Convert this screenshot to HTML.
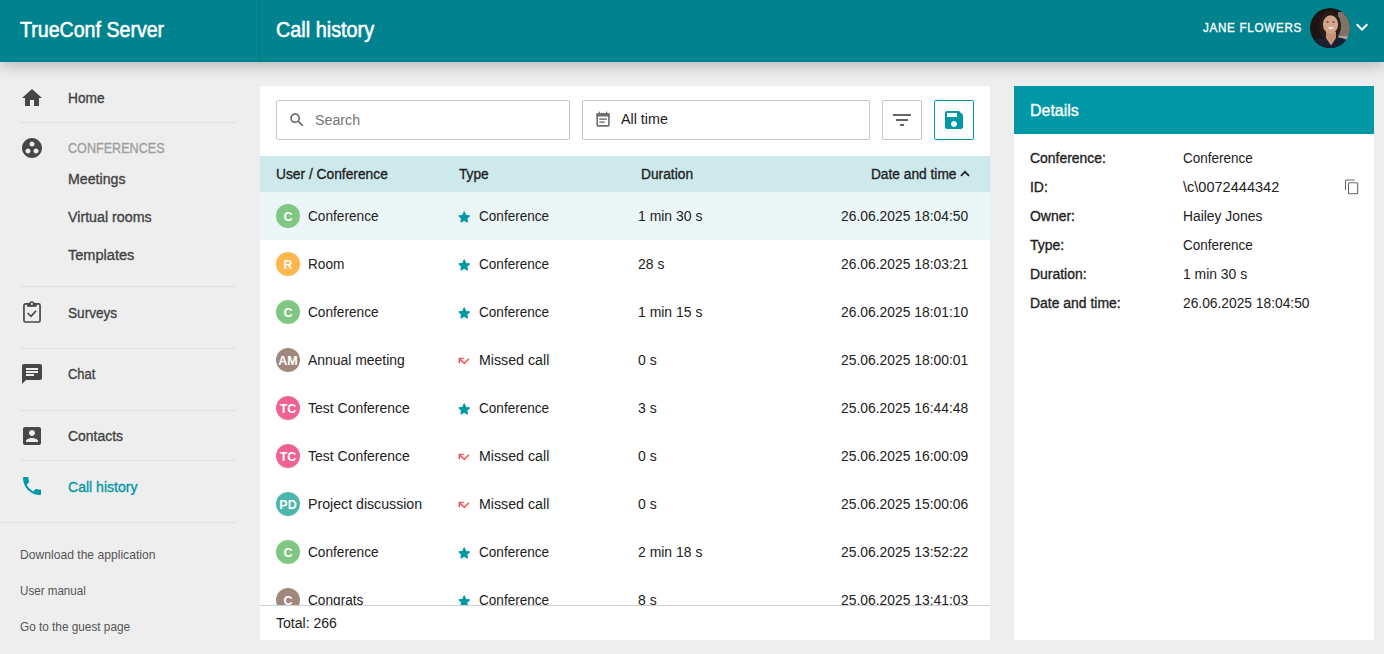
<!DOCTYPE html>
<html><head><meta charset="utf-8">
<style>
*{box-sizing:border-box;margin:0;padding:0}
html,body{width:1384px;height:654px;overflow:hidden}
body{background:#eeeeee;font-family:"Liberation Sans",sans-serif;color:#212121;position:relative}
.a{position:absolute;white-space:nowrap}
svg{display:block;position:absolute}
.sep{position:absolute;left:20px;width:216px;height:1px;background:#e0e0e0}
.box{position:absolute;top:100px;height:40px;border:1px solid #c6c6c6;border-radius:2px;background:#fff}
.av{position:absolute;left:276px;width:24px;height:24px;border-radius:50%;color:#fff;font-size:12.5px;font-weight:bold;text-align:center;line-height:26.5px}
</style></head><body>
<div class="a" style="left:260px;top:86px;width:730px;height:554px;background:#fff"></div>
<div class="a" style="left:1014px;top:86px;width:360px;height:554px;background:#fff"></div>
<div class="a" style="left:1014px;top:86px;width:360px;height:48px;background:#0097a7"></div>
<div class="a" style="left:0;top:0;width:1384px;height:62px;background:#00838f;box-shadow:0 2px 16px rgba(0,0,0,.29);z-index:2">
<div class="a" style="left:259px;top:0;width:1px;height:62px;background:rgba(0,0,0,.12)"></div>
<div class="a" style="top:16.65px;font-size:21.2px;line-height:26px;color:#fff;left:20px;-webkit-text-stroke:0.55px #fff;transform:scaleX(0.9250);transform-origin:left 0;">TrueConf Server</div>
<div class="a" style="top:16.65px;font-size:21.2px;line-height:26px;color:#fff;left:276px;-webkit-text-stroke:0.55px #fff;transform:scaleX(0.9363);transform-origin:left 0;">Call history</div>
<div class="a" style="top:18.89px;font-size:13.3px;line-height:17px;color:#fff;left:1203px;letter-spacing:0.8px;-webkit-text-stroke:0.35px #fff;transform:scaleX(0.8757);transform-origin:left 0;">JANE FLOWERS</div>
<svg style="left:1310px;top:8px" width="40" height="40" viewBox="0 0 40 40">
<defs><clipPath id="cc"><circle cx="20" cy="20" r="20"/></clipPath></defs>
<g clip-path="url(#cc)">
<rect width="40" height="40" fill="#1d1512"/>
<rect x="28" y="4" width="12" height="30" fill="#7f7368"/>
<rect x="29" y="28" width="11" height="3" fill="#a99d90"/>
<ellipse cx="20" cy="18" rx="11" ry="14.5" fill="#2a1c17"/>
<rect x="16" y="24" width="10" height="14" fill="#c49479"/>
<ellipse cx="20.5" cy="16.5" rx="7.6" ry="9.2" fill="#d2a48b"/>
<path d="M0 40 L2 34 Q9 29 16 30 L21 37.5 L26 30 Q34 29 38 34 L40 40 Z" fill="#1a1f31"/>
<ellipse cx="21" cy="20" rx="2.8" ry="1.2" fill="#e9dcd4"/>
<ellipse cx="17.6" cy="14" rx="1.3" ry="0.7" fill="#5a3a2e"/>
<ellipse cx="23.6" cy="14" rx="1.3" ry="0.7" fill="#5a3a2e"/>
</g></svg>
<svg style="left:1350px;top:15.3px" width="24" height="24" viewBox="0 0 24 24"><path fill="#fff" d="M16.59 8.59L12 13.17 7.41 8.59 6 10l6 6 6-6z"/></svg>
</div>
<svg style="left:20px;top:85.8px" width="24" height="24" viewBox="0 0 24 24"><path fill="#474747" d="M10 20v-6h4v6h5v-8h3L12 3 2 12h3v8z"/></svg>
<div class="a" style="top:87.90px;font-size:15.3px;line-height:19px;color:#424242;left:68px;-webkit-text-stroke:0.35px #424242;transform:scaleX(0.8953);transform-origin:left 0;">Home</div>
<div class="sep" style="top:122px"></div>
<svg style="left:20px;top:136px" width="24" height="24" viewBox="0 0 24 24"><path fill="#474747" d="M12 2C6.48 2 2 6.48 2 12s4.480 10 10 10 10-4.48 10-10S17.52 2 12 2zM8 17.5c-1.38 0-2.5-1.12-2.5-2.5s1.12-2.5 2.5-2.5 2.5 1.12 2.5 2.5-1.12 2.5-2.5 2.5zM9.5 8c0-1.38 1.12-2.5 2.5-2.5s2.5 1.12 2.5 2.5-1.12 2.5-2.5 2.5S9.5 9.38 9.5 8zm6.5 9.5c-1.38 0-2.5-1.12-2.5-2.5s1.12-2.5 2.5-2.5 2.5 1.12 2.5 2.5-1.12 2.5-2.5 2.5z"/></svg>
<div class="a" style="top:138.13px;font-size:15.5px;line-height:19px;color:#9e9e9e;left:68px;-webkit-text-stroke:0.35px #9e9e9e;transform:scaleX(0.8128);transform-origin:left 0;">CONFERENCES</div>
<div class="a" style="top:168.90px;font-size:15.3px;line-height:19px;color:#424242;left:68px;-webkit-text-stroke:0.35px #424242;transform:scaleX(0.9270);transform-origin:left 0;">Meetings</div>
<div class="a" style="top:206.90px;font-size:15.3px;line-height:19px;color:#424242;left:68px;-webkit-text-stroke:0.35px #424242;transform:scaleX(0.9311);transform-origin:left 0;">Virtual rooms</div>
<div class="a" style="top:244.90px;font-size:15.3px;line-height:19px;color:#424242;left:68px;-webkit-text-stroke:0.35px #424242;transform:scaleX(0.9508);transform-origin:left 0;">Templates</div>
<div class="sep" style="top:286px"></div>
<svg style="left:20px;top:300px" width="24" height="24" viewBox="0 0 24 24"><rect x="3.95" y="3.9" width="16.1" height="18.1" rx="1.6" fill="none" stroke="#474747" stroke-width="1.7"/><rect x="7" y="3.4" width="9.8" height="3.4" rx="0.8" fill="#474747"/><circle cx="11.9" cy="3.9" r="2.6" fill="#474747"/><circle cx="11.9" cy="3.9" r="1.05" fill="#eeeeee"/><path d="M7.6 13L11.1 16.3L16.1 10.8" fill="none" stroke="#474747" stroke-width="1.7"/></svg>
<div class="a" style="top:302.90px;font-size:15.3px;line-height:19px;color:#424242;left:68px;-webkit-text-stroke:0.35px #424242;transform:scaleX(0.8888);transform-origin:left 0;">Surveys</div>
<div class="sep" style="top:348px"></div>
<svg style="left:20px;top:362px" width="24" height="24" viewBox="0 0 24 24"><path fill="#474747" d="M20 2H4c-1.1 0-1.99.9-1.99 2L2 22l4-4h14c1.1 0 2-.9 2-2V4c0-1.1-.9-2-2-2zM6 9h12v2H6V9zm8 5H6v-2h8v2zm4-6H6V6h12v2z"/></svg>
<div class="a" style="top:363.90px;font-size:15.3px;line-height:19px;color:#424242;left:68px;-webkit-text-stroke:0.35px #424242;transform:scaleX(0.8470);transform-origin:left 0;">Chat</div>
<div class="sep" style="top:410px"></div>
<svg style="left:20px;top:424px" width="24" height="24" viewBox="0 0 24 24"><path fill="#474747" d="M3 5v14c0 1.1.89 2 2 2h14c1.1 0 2-.9 2-2V5c0-1.1-.9-2-2-2H5c-1.11 0-2 .9-2 2zm12 4c0 1.66-1.34 3-3 3s-3-1.34-3-3 1.34-3 3-3 3 1.34 3 3zm-9 8c0-2 4-3.1 6-3.1s6 1.1 6 3.1v1H6v-1z"/></svg>
<div class="a" style="top:425.90px;font-size:15.3px;line-height:19px;color:#424242;left:68px;-webkit-text-stroke:0.35px #424242;transform:scaleX(0.9121);transform-origin:left 0;">Contacts</div>
<div class="sep" style="top:460px"></div>
<svg style="left:20px;top:474px" width="24" height="24" viewBox="0 0 24 24"><path fill="#0097a7" d="M6.62 10.79c1.44 2.83 3.76 5.14 6.59 6.59l2.2-2.2c.27-.27.67-.36 1.02-.24 1.12.37 2.33.57 3.57.57.55 0 1 .45 1 1V20c0 .55-.45 1-1 1-9.39 0-17-7.61-17-17 0-.55.45-1 1-1h3.5c.55 0 1 .45 1 1 0 1.25.2 2.45.57 3.57.11.35.03.74-.25 1.02l-2.2 2.2z"/></svg>
<div class="a" style="top:476.90px;font-size:15.3px;line-height:19px;color:#0097a7;left:68px;-webkit-text-stroke:0.35px #0097a7;transform:scaleX(0.9183);transform-origin:left 0;">Call history</div>
<div class="sep" style="top:522px;left:0;width:236px"></div>
<div class="a" style="top:545.85px;font-size:13.4px;line-height:17px;color:#555;left:20px;transform:scaleX(0.9050);transform-origin:left 0;">Download the application</div>
<div class="a" style="top:581.85px;font-size:13.4px;line-height:17px;color:#555;left:20px;transform:scaleX(0.8668);transform-origin:left 0;">User manual</div>
<div class="a" style="top:617.85px;font-size:13.4px;line-height:17px;color:#555;left:20px;transform:scaleX(0.8800);transform-origin:left 0;">Go to the guest page</div>
<div class="box" style="left:276px;width:294px"></div>
<svg style="left:288px;top:111px" width="18" height="18" viewBox="0 0 24 24"><path fill="#616161" d="M15.5 14h-.79l-.28-.27C15.41 12.59 16 11.11 16 9.5 16 5.91 13.09 3 9.5 3S3 5.91 3 9.5 5.91 16 9.5 16c1.61 0 3.09-.59 4.23-1.57l.27.28v.79l5 4.99L20.49 19l-4.99-5zm-6 0C7.01 14 5 11.99 5 9.5S7.01 5 9.5 5 14 7.01 14 9.5 11.99 14 9.5 14z"/></svg>
<div class="a" style="top:110.13px;font-size:15.5px;line-height:19px;color:#757575;left:315px;transform:scaleX(0.9179);transform-origin:left 0;">Search</div>
<div class="box" style="left:582px;width:288px"></div>
<svg style="left:595px;top:110px" width="16" height="17" viewBox="0 0 16 17">
<rect x="2.2" y="4" width="11.7" height="11.9" rx="0.9" fill="none" stroke="#6d6d6d" stroke-width="1.6"/>
<rect x="1.4" y="3.2" width="13.3" height="3.3" rx="0.6" fill="#6d6d6d"/>
<rect x="3.8" y="1.6" width="1.1" height="2.2" fill="#6d6d6d"/>
<rect x="11" y="1.6" width="1.1" height="2.2" fill="#6d6d6d"/>
<rect x="4.3" y="8.4" width="7.4" height="1.4" fill="#6d6d6d"/>
<rect x="4.3" y="11.4" width="5.4" height="1.4" fill="#6d6d6d"/></svg>
<div class="a" style="top:109.13px;font-size:15.5px;line-height:19px;color:#212121;left:621px;transform:scaleX(0.9220);transform-origin:left 0;">All time</div>
<div class="box" style="left:882px;width:40px"></div>
<svg style="left:890px;top:108px" width="24" height="24" viewBox="0 0 24 24"><path fill="#666" d="M10 18h4v-2h-4v2zM3 6v2h18V6H3zm3 7h12v-2H6v2z"/></svg>
<div class="box" style="left:934px;width:40px;border:1px solid #0097a7"></div>
<svg style="left:942px;top:108px" width="24" height="24" viewBox="0 0 24 24"><path fill="#0097a7" d="M17 3H5c-1.11 0-2 .9-2 2v14c0 1.1.89 2 2 2h14c1.1 0 2-.9 2-2V7l-4-4zm-5 16c-1.66 0-3-1.34-3-3s1.34-3 3-3 3 1.34 3 3-1.34 3-3 3zm3-10H5V5h10v4z"/></svg>
<div class="a" style="left:260px;top:156px;width:730px;height:36px;background:#cde9ec"></div>
<div class="a" style="top:164.13px;font-size:15.5px;line-height:19px;color:#212121;left:276px;-webkit-text-stroke:0.35px #212121;transform:scaleX(0.8890);transform-origin:left 0;">User / Conference</div>
<div class="a" style="top:164.13px;font-size:15.5px;line-height:19px;color:#212121;left:459px;-webkit-text-stroke:0.35px #212121;transform:scaleX(0.8825);transform-origin:left 0;">Type</div>
<div class="a" style="top:164.13px;font-size:15.5px;line-height:19px;color:#212121;left:641px;-webkit-text-stroke:0.35px #212121;transform:scaleX(0.8887);transform-origin:left 0;">Duration</div>
<div class="a" style="top:164.13px;font-size:15.5px;line-height:19px;color:#212121;right:428px;-webkit-text-stroke:0.35px #212121;transform:scaleX(0.8869);transform-origin:right 0;">Date and time</div>
<svg style="left:958px;top:168px" width="14" height="12" viewBox="0 0 14 12"><path d="M3 7.8L7 3.8l4 4" fill="none" stroke="#212121" stroke-width="1.7"/></svg>
<div class="a" style="left:260px;top:192px;width:730px;height:413px;overflow:hidden">
<div class="a" style="left:0;top:0;width:730px;height:48px;background:#ebf6f7"></div>
<div class="av" style="left:16px;top:12px;background:#81c784">C</div>
<div class="a" style="top:14.13px;font-size:15.5px;line-height:19px;color:#212121;left:48px;transform:scaleX(0.8810);transform-origin:left 0;">Conference</div>
<svg style="left:195.8px;top:17.3px" width="16.4" height="16.4" viewBox="0 0 24 24"><path fill="#0097a7" d="M12 17.27l4.15 2.51c.76.46 1.69-.22 1.49-1.08l-1.1-4.72 3.67-3.18c.67-.58.31-1.68-.57-1.75l-4.83-.41-1.89-4.46c-.34-.81-1.5-.81-1.84 0L9.19 8.630l-4.83.41c-.88.07-1.24 1.17-.57 1.75l3.67 3.18-1.1 4.72c-.2.86.73 1.54 1.490 1.08l4.15-2.5z"/></svg>
<div class="a" style="top:14.13px;font-size:15.5px;line-height:19px;color:#212121;left:219px;transform:scaleX(0.8750);transform-origin:left 0;">Conference</div>
<div class="a" style="top:14.13px;font-size:15.5px;line-height:19px;color:#212121;left:378px;transform:scaleX(0.9000);transform-origin:left 0;">1 min 30 s</div>
<div class="a" style="top:14.13px;font-size:15.5px;line-height:19px;color:#212121;right:22px;transform:scaleX(0.8940);transform-origin:right 0;">26.06.2025 18:04:50</div>
<div class="av" style="left:16px;top:60px;background:#ffb74d">R</div>
<div class="a" style="top:62.13px;font-size:15.5px;line-height:19px;color:#212121;left:48px;transform:scaleX(0.8810);transform-origin:left 0;">Room</div>
<svg style="left:195.8px;top:65.3px" width="16.4" height="16.4" viewBox="0 0 24 24"><path fill="#0097a7" d="M12 17.27l4.15 2.51c.76.46 1.69-.22 1.49-1.08l-1.1-4.72 3.67-3.18c.67-.58.31-1.68-.57-1.75l-4.83-.41-1.89-4.46c-.34-.81-1.5-.81-1.84 0L9.19 8.630l-4.83.41c-.88.07-1.24 1.17-.57 1.75l3.67 3.18-1.1 4.72c-.2.86.73 1.54 1.490 1.08l4.15-2.5z"/></svg>
<div class="a" style="top:62.13px;font-size:15.5px;line-height:19px;color:#212121;left:219px;transform:scaleX(0.8750);transform-origin:left 0;">Conference</div>
<div class="a" style="top:62.13px;font-size:15.5px;line-height:19px;color:#212121;left:378px;transform:scaleX(0.9000);transform-origin:left 0;">28 s</div>
<div class="a" style="top:62.13px;font-size:15.5px;line-height:19px;color:#212121;right:22px;transform:scaleX(0.8940);transform-origin:right 0;">26.06.2025 18:03:21</div>
<div class="av" style="left:16px;top:108px;background:#81c784">C</div>
<div class="a" style="top:110.13px;font-size:15.5px;line-height:19px;color:#212121;left:48px;transform:scaleX(0.8810);transform-origin:left 0;">Conference</div>
<svg style="left:195.8px;top:113.3px" width="16.4" height="16.4" viewBox="0 0 24 24"><path fill="#0097a7" d="M12 17.27l4.15 2.51c.76.46 1.69-.22 1.49-1.08l-1.1-4.72 3.67-3.18c.67-.58.31-1.68-.57-1.75l-4.83-.41-1.89-4.46c-.34-.81-1.5-.81-1.84 0L9.19 8.630l-4.83.41c-.88.07-1.24 1.17-.57 1.75l3.67 3.18-1.1 4.72c-.2.86.73 1.54 1.490 1.08l4.15-2.5z"/></svg>
<div class="a" style="top:110.13px;font-size:15.5px;line-height:19px;color:#212121;left:219px;transform:scaleX(0.8750);transform-origin:left 0;">Conference</div>
<div class="a" style="top:110.13px;font-size:15.5px;line-height:19px;color:#212121;left:378px;transform:scaleX(0.9000);transform-origin:left 0;">1 min 15 s</div>
<div class="a" style="top:110.13px;font-size:15.5px;line-height:19px;color:#212121;right:22px;transform:scaleX(0.8940);transform-origin:right 0;">26.06.2025 18:01:10</div>
<div class="av" style="left:16px;top:156px;background:#a1887f">AM</div>
<div class="a" style="top:158.13px;font-size:15.5px;line-height:19px;color:#212121;left:48px;transform:scaleX(0.8977);transform-origin:left 0;">Annual meeting</div>
<svg style="left:196px;top:163px" width="16" height="12" viewBox="0 0 16 12"><path d="M3.3 8.2V3.4H7.6M3.3 3.4L8.3 8.4L12.9 3.8" fill="none" stroke="#ff4f4f" stroke-width="1.4" stroke-linejoin="miter"/></svg>
<div class="a" style="top:158.13px;font-size:15.5px;line-height:19px;color:#212121;left:219px;transform:scaleX(0.9170);transform-origin:left 0;">Missed call</div>
<div class="a" style="top:158.13px;font-size:15.5px;line-height:19px;color:#212121;left:378px;transform:scaleX(0.9000);transform-origin:left 0;">0 s</div>
<div class="a" style="top:158.13px;font-size:15.5px;line-height:19px;color:#212121;right:22px;transform:scaleX(0.8940);transform-origin:right 0;">25.06.2025 18:00:01</div>
<div class="av" style="left:16px;top:204px;background:#f06292">TC</div>
<div class="a" style="top:206.13px;font-size:15.5px;line-height:19px;color:#212121;left:48px;transform:scaleX(0.9021);transform-origin:left 0;">Test Conference</div>
<svg style="left:195.8px;top:209.3px" width="16.4" height="16.4" viewBox="0 0 24 24"><path fill="#0097a7" d="M12 17.27l4.15 2.51c.76.46 1.69-.22 1.49-1.08l-1.1-4.72 3.67-3.18c.67-.58.31-1.68-.57-1.75l-4.83-.41-1.89-4.46c-.34-.81-1.5-.81-1.84 0L9.19 8.630l-4.83.41c-.88.07-1.24 1.17-.57 1.75l3.67 3.18-1.1 4.72c-.2.86.73 1.54 1.490 1.08l4.15-2.5z"/></svg>
<div class="a" style="top:206.13px;font-size:15.5px;line-height:19px;color:#212121;left:219px;transform:scaleX(0.8750);transform-origin:left 0;">Conference</div>
<div class="a" style="top:206.13px;font-size:15.5px;line-height:19px;color:#212121;left:378px;transform:scaleX(0.9000);transform-origin:left 0;">3 s</div>
<div class="a" style="top:206.13px;font-size:15.5px;line-height:19px;color:#212121;right:22px;transform:scaleX(0.8940);transform-origin:right 0;">25.06.2025 16:44:48</div>
<div class="av" style="left:16px;top:252px;background:#f06292">TC</div>
<div class="a" style="top:254.13px;font-size:15.5px;line-height:19px;color:#212121;left:48px;transform:scaleX(0.9021);transform-origin:left 0;">Test Conference</div>
<svg style="left:196px;top:259px" width="16" height="12" viewBox="0 0 16 12"><path d="M3.3 8.2V3.4H7.6M3.3 3.4L8.3 8.4L12.9 3.8" fill="none" stroke="#ff4f4f" stroke-width="1.4" stroke-linejoin="miter"/></svg>
<div class="a" style="top:254.13px;font-size:15.5px;line-height:19px;color:#212121;left:219px;transform:scaleX(0.9170);transform-origin:left 0;">Missed call</div>
<div class="a" style="top:254.13px;font-size:15.5px;line-height:19px;color:#212121;left:378px;transform:scaleX(0.9000);transform-origin:left 0;">0 s</div>
<div class="a" style="top:254.13px;font-size:15.5px;line-height:19px;color:#212121;right:22px;transform:scaleX(0.8940);transform-origin:right 0;">25.06.2025 16:00:09</div>
<div class="av" style="left:16px;top:300px;background:#4db6ac">PD</div>
<div class="a" style="top:302.13px;font-size:15.5px;line-height:19px;color:#212121;left:48px;transform:scaleX(0.9136);transform-origin:left 0;">Project discussion</div>
<svg style="left:196px;top:307px" width="16" height="12" viewBox="0 0 16 12"><path d="M3.3 8.2V3.4H7.6M3.3 3.4L8.3 8.4L12.9 3.8" fill="none" stroke="#ff4f4f" stroke-width="1.4" stroke-linejoin="miter"/></svg>
<div class="a" style="top:302.13px;font-size:15.5px;line-height:19px;color:#212121;left:219px;transform:scaleX(0.9170);transform-origin:left 0;">Missed call</div>
<div class="a" style="top:302.13px;font-size:15.5px;line-height:19px;color:#212121;left:378px;transform:scaleX(0.9000);transform-origin:left 0;">0 s</div>
<div class="a" style="top:302.13px;font-size:15.5px;line-height:19px;color:#212121;right:22px;transform:scaleX(0.8940);transform-origin:right 0;">25.06.2025 15:00:06</div>
<div class="av" style="left:16px;top:348px;background:#81c784">C</div>
<div class="a" style="top:350.13px;font-size:15.5px;line-height:19px;color:#212121;left:48px;transform:scaleX(0.8810);transform-origin:left 0;">Conference</div>
<svg style="left:195.8px;top:353.3px" width="16.4" height="16.4" viewBox="0 0 24 24"><path fill="#0097a7" d="M12 17.27l4.15 2.51c.76.46 1.69-.22 1.49-1.08l-1.1-4.72 3.67-3.18c.67-.58.31-1.68-.57-1.75l-4.83-.41-1.89-4.46c-.34-.81-1.5-.81-1.84 0L9.19 8.630l-4.83.41c-.88.07-1.24 1.17-.57 1.75l3.67 3.18-1.1 4.72c-.2.86.73 1.54 1.490 1.08l4.15-2.5z"/></svg>
<div class="a" style="top:350.13px;font-size:15.5px;line-height:19px;color:#212121;left:219px;transform:scaleX(0.8750);transform-origin:left 0;">Conference</div>
<div class="a" style="top:350.13px;font-size:15.5px;line-height:19px;color:#212121;left:378px;transform:scaleX(0.9000);transform-origin:left 0;">2 min 18 s</div>
<div class="a" style="top:350.13px;font-size:15.5px;line-height:19px;color:#212121;right:22px;transform:scaleX(0.8940);transform-origin:right 0;">25.06.2025 13:52:22</div>
<div class="av" style="left:16px;top:396px;background:#a1887f">C</div>
<div class="a" style="top:398.13px;font-size:15.5px;line-height:19px;color:#212121;left:48px;transform:scaleX(0.8810);transform-origin:left 0;">Congrats</div>
<svg style="left:195.8px;top:401.3px" width="16.4" height="16.4" viewBox="0 0 24 24"><path fill="#0097a7" d="M12 17.27l4.15 2.51c.76.46 1.69-.22 1.49-1.08l-1.1-4.72 3.67-3.18c.67-.58.31-1.68-.57-1.75l-4.83-.41-1.89-4.46c-.34-.81-1.5-.81-1.84 0L9.19 8.630l-4.83.41c-.88.07-1.24 1.17-.57 1.75l3.67 3.18-1.1 4.72c-.2.86.73 1.54 1.490 1.08l4.15-2.5z"/></svg>
<div class="a" style="top:398.13px;font-size:15.5px;line-height:19px;color:#212121;left:219px;transform:scaleX(0.8750);transform-origin:left 0;">Conference</div>
<div class="a" style="top:398.13px;font-size:15.5px;line-height:19px;color:#212121;left:378px;transform:scaleX(0.9000);transform-origin:left 0;">8 s</div>
<div class="a" style="top:398.13px;font-size:15.5px;line-height:19px;color:#212121;right:22px;transform:scaleX(0.8940);transform-origin:right 0;">25.06.2025 13:41:03</div>
</div>
<div class="a" style="left:260px;top:605px;width:730px;height:1px;background:#cfcfcf"></div>
<div class="a" style="top:613.13px;font-size:15.5px;line-height:19px;color:#212121;left:276px;transform:scaleX(0.9060);transform-origin:left 0;">Total: 266</div>
<div class="a" style="top:99.78px;font-size:16.5px;line-height:21px;color:#fff;left:1030px;-webkit-text-stroke:0.35px #fff;transform:scaleX(0.9680);transform-origin:left 0;">Details</div>
<div class="a" style="top:148.13px;font-size:15.5px;line-height:19px;color:#212121;left:1030px;-webkit-text-stroke:0.35px #212121;transform:scaleX(0.8990);transform-origin:left 0;">Conference:</div>
<div class="a" style="top:148.13px;font-size:15.5px;line-height:19px;color:#212121;left:1183px;transform:scaleX(0.8711);transform-origin:left 0;">Conference</div>
<div class="a" style="top:177.13px;font-size:15.5px;line-height:19px;color:#212121;left:1030px;-webkit-text-stroke:0.35px #212121;transform:scaleX(0.8990);transform-origin:left 0;">ID:</div>
<div class="a" style="top:177.13px;font-size:15.5px;line-height:19px;color:#212121;left:1183px;transform:scaleX(0.9383);transform-origin:left 0;">\c\0072444342</div>
<div class="a" style="top:206.13px;font-size:15.5px;line-height:19px;color:#212121;left:1030px;-webkit-text-stroke:0.35px #212121;transform:scaleX(0.8990);transform-origin:left 0;">Owner:</div>
<div class="a" style="top:206.13px;font-size:15.5px;line-height:19px;color:#212121;left:1183px;transform:scaleX(0.8938);transform-origin:left 0;">Hailey Jones</div>
<div class="a" style="top:235.13px;font-size:15.5px;line-height:19px;color:#212121;left:1030px;-webkit-text-stroke:0.35px #212121;transform:scaleX(0.8990);transform-origin:left 0;">Type:</div>
<div class="a" style="top:235.13px;font-size:15.5px;line-height:19px;color:#212121;left:1183px;transform:scaleX(0.8711);transform-origin:left 0;">Conference</div>
<div class="a" style="top:264.13px;font-size:15.5px;line-height:19px;color:#212121;left:1030px;-webkit-text-stroke:0.35px #212121;transform:scaleX(0.8990);transform-origin:left 0;">Duration:</div>
<div class="a" style="top:264.13px;font-size:15.5px;line-height:19px;color:#212121;left:1183px;transform:scaleX(0.8973);transform-origin:left 0;">1 min 30 s</div>
<div class="a" style="top:293.13px;font-size:15.5px;line-height:19px;color:#212121;left:1030px;-webkit-text-stroke:0.35px #212121;transform:scaleX(0.8990);transform-origin:left 0;">Date and time:</div>
<div class="a" style="top:293.13px;font-size:15.5px;line-height:19px;color:#212121;left:1183px;transform:scaleX(0.8894);transform-origin:left 0;">26.06.2025 18:04:50</div>
<svg style="left:1343px;top:178px" width="17" height="17" viewBox="0 0 17 17"><path d="M2.5 12V2.8Q2.5 2 3.3 2H11.6" fill="none" stroke="#666" stroke-width="1.1"/><rect x="5.5" y="4.8" width="9.2" height="11" rx="1" fill="none" stroke="#666" stroke-width="1.1"/></svg>
</body></html>
